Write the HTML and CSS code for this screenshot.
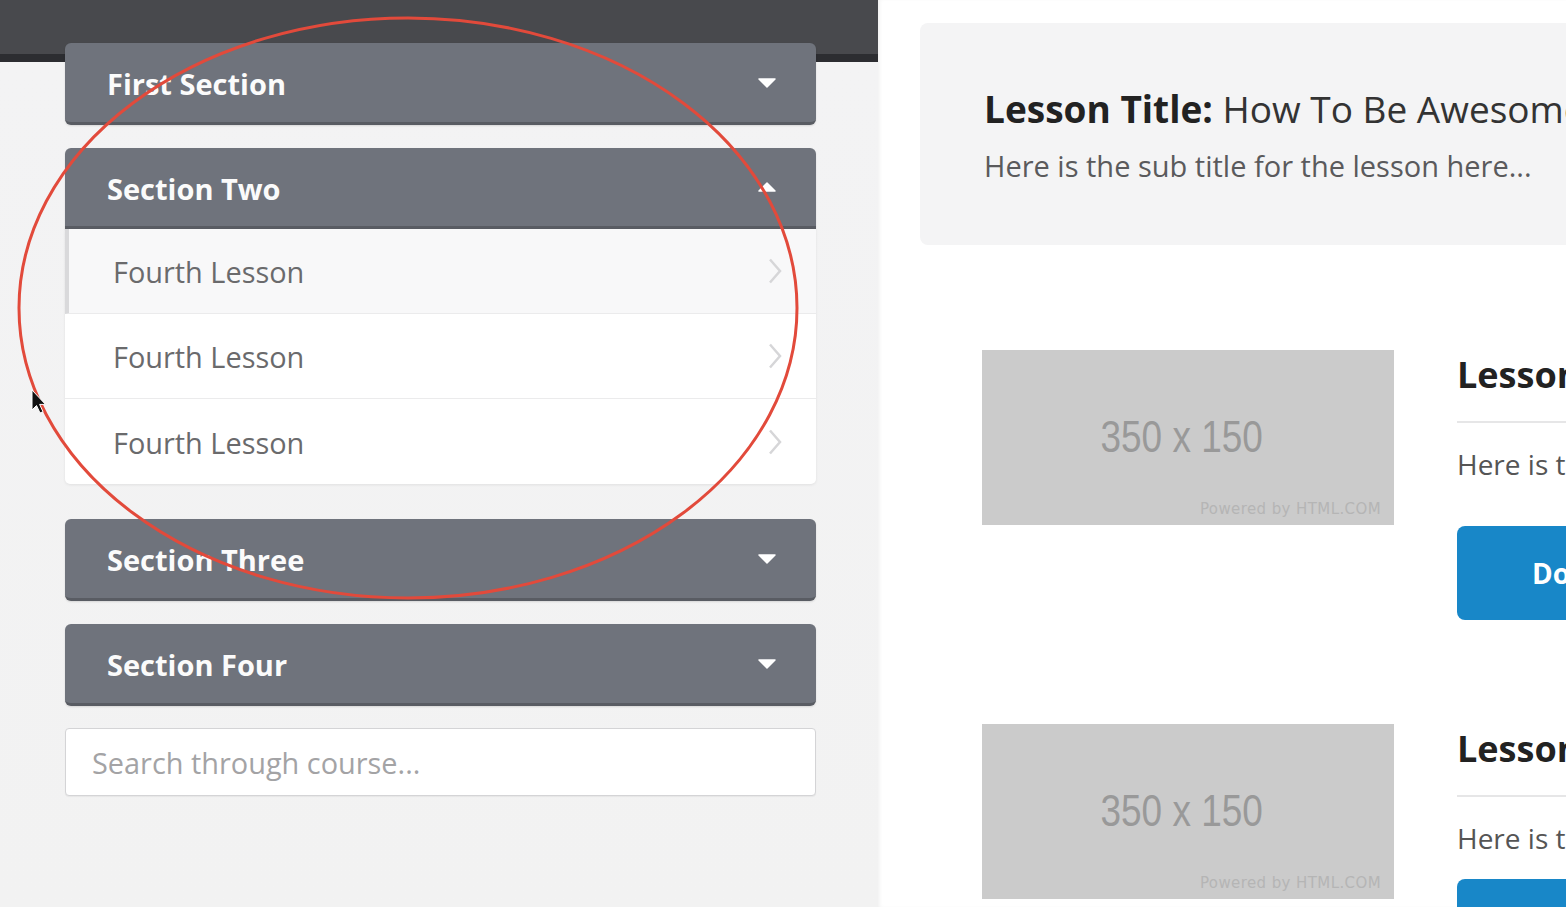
FILE: index.html
```html
<!DOCTYPE html>
<html lang="en">
<head>
<meta charset="utf-8">
<title>Course Lesson</title>
<link rel="stylesheet" href="styles.css">
</head>
<body>
<div class="page">
  <aside class="sidebar">
    <div class="accordion">
      <div class="section">
        <div class="section-head">
          <span>First Section</span>
          <svg class="caret" width="18" height="10" viewBox="0 0 18 10"><path d="M1 1 H17 L9 9 Z" fill="#fff" stroke="#fff" stroke-width="1.5" stroke-linejoin="round"/></svg>
        </div>
      </div>
      <div class="section open">
        <div class="section-head">
          <span>Section Two</span>
          <svg class="caret" width="18" height="10" viewBox="0 0 18 10"><path d="M1 9 H17 L9 1 Z" fill="#fff" stroke="#fff" stroke-width="1.5" stroke-linejoin="round"/></svg>
        </div>
        <ul class="lessons">
          <li class="lesson active"><span>Fourth Lesson</span><svg class="chev" width="14" height="26" viewBox="0 0 14 26"><path d="M2 1.5 L12 13 L2 24.5" fill="none" stroke="#d6d6d8" stroke-width="2.5"/></svg></li>
          <li class="lesson"><span>Fourth Lesson</span><svg class="chev" width="14" height="26" viewBox="0 0 14 26"><path d="M2 1.5 L12 13 L2 24.5" fill="none" stroke="#d6d6d8" stroke-width="2.5"/></svg></li>
          <li class="lesson"><span>Fourth Lesson</span><svg class="chev" width="14" height="26" viewBox="0 0 14 26"><path d="M2 1.5 L12 13 L2 24.5" fill="none" stroke="#d6d6d8" stroke-width="2.5"/></svg></li>
        </ul>
      </div>
      <div class="section">
        <div class="section-head">
          <span>Section Three</span>
          <svg class="caret" width="18" height="10" viewBox="0 0 18 10"><path d="M1 1 H17 L9 9 Z" fill="#fff" stroke="#fff" stroke-width="1.5" stroke-linejoin="round"/></svg>
        </div>
      </div>
      <div class="section">
        <div class="section-head">
          <span>Section Four</span>
          <svg class="caret" width="18" height="10" viewBox="0 0 18 10"><path d="M1 1 H17 L9 9 Z" fill="#fff" stroke="#fff" stroke-width="1.5" stroke-linejoin="round"/></svg>
        </div>
      </div>
      <input class="search" type="text" placeholder="Search through course...">
    </div>
  </aside>

  <main class="content">
    <div class="lesson-card">
      <h1 class="lesson-title"><strong>Lesson Title:</strong> How To Be Awesome</h1>
      <p class="lesson-sub">Here is the sub title for the lesson here...</p>
    </div>

    <div class="row">
      <div class="ph">
        <div class="ph-size"><span>350 x 150</span></div>
        <div class="ph-credit">Powered by HTML.COM</div>
      </div>
      <div class="row-text">
        <h2>Lesson One</h2>
        <hr>
        <p>Here is the lesson description</p>
        <a class="btn" href="#">Download</a>
      </div>
    </div>

    <div class="row">
      <div class="ph">
        <div class="ph-size"><span>350 x 150</span></div>
        <div class="ph-credit">Powered by HTML.COM</div>
      </div>
      <div class="row-text">
        <h2>Lesson Two</h2>
        <hr>
        <p>Here is the lesson description</p>
        <a class="btn btn-tight" href="#">Download</a>
      </div>
    </div>
  </main>

  <svg class="annotation" width="1566" height="907" viewBox="0 0 1566 907">
    <ellipse cx="408" cy="308" rx="389" ry="290" fill="none" stroke="#e24a3b" stroke-width="3"/>
  </svg>
  <svg class="cursor" width="16" height="26" viewBox="0 0 16 26">
    <path d="M1 1 L1 21 L5.5 16.5 L9 24 L12 22.7 L8.6 15.4 L14.5 15.4 Z" fill="#111" stroke="#fff" stroke-width="1"/>
  </svg>
</div>
</body>
</html>
```

FILE: styles.css
```css
* { box-sizing: border-box; }

html, body {
  margin: 0;
  padding: 0;
  width: 1566px;
  height: 907px;
  overflow: hidden;
  font-family: "Open Sans", "Noto Sans", sans-serif;
}

.page {
  position: relative;
  display: flex;
  width: 1566px;
  height: 907px;
  overflow: hidden;
}

/* ---------- Sidebar ---------- */
.sidebar {
  flex: 0 0 878px;
  height: 907px;
  background: linear-gradient(to bottom,
    #48494d 0, #48494d 54px,
    #2c2d31 54px, #2c2d31 62px,
    #f3f3f4 62px, #f2f2f2 100%);
  padding: 43px 0 0 65px;
}

.accordion {
  width: 751px;
  display: flex;
  flex-direction: column;
}

.section { margin-bottom: 23px; }
.section.open { margin-bottom: 35px; }

.section-head {
  height: 82px;
  background: #6f737c;
  border-bottom: 3px solid #595c63;
  border-radius: 6px;
  display: flex;
  align-items: center;
  justify-content: space-between;
  padding: 0 40px 0 42px;
  color: #fbfbfb;
  font-weight: 700;
  font-size: 29px;
  box-shadow: 0 1px 2px rgba(0,0,0,0.12);
}
.section-head span { padding-top: 2px; }

.section.open .section-head {
  border-radius: 6px 6px 0 0;
  height: 81px;
}

.lessons {
  list-style: none;
  margin: 0;
  padding: 0;
  background: #fff;
  border-radius: 0 0 5px 5px;
  box-shadow: 0 1px 3px rgba(0,0,0,0.08);
  overflow: hidden;
}

.lesson {
  height: 85px;
  display: flex;
  align-items: center;
  justify-content: space-between;
  padding: 0 34px 0 48px;
  border-bottom: 1px solid #ebebec;
  color: #6a6a6c;
  font-size: 28.9px;
}
.lesson span { padding-top: 1px; }
.lesson:last-child { border-bottom: none; }
.lesson.active {
  background: #f8f8f9;
  border-left: 4px solid #d9d9db;
  padding-left: 44px;
}

.search {
  margin-top: -1px;
  width: 751px;
  height: 68px;
  border: 1px solid #d4d4d6;
  border-radius: 4px;
  background: #fff;
  padding: 0 26px;
  font-family: "Open Sans", "Noto Sans", sans-serif;
  font-size: 28.9px;
  color: #555;
  outline: none;
  box-shadow: 0 1px 1px rgba(0,0,0,0.05);
}
.search::placeholder { color: #a3a3a5; }

/* ---------- Content ---------- */
.content {
  flex: 1 1 auto;
  min-width: 0;
  height: 907px;
  overflow: hidden;
  background: #fff;
  padding: 23px 0 0 42px;
  box-shadow: inset 3px 0 4px -2px rgba(0,0,0,0.07);
}

.lesson-card {
  width: 900px;
  background: #f4f4f5;
  border-radius: 8px;
  padding: 62px 64px 60px;
}

.lesson-title {
  margin: 0;
  font-size: 37px;
  line-height: 47px;
  font-weight: 400;
  color: #333;
  white-space: nowrap;
}
.lesson-title strong { font-weight: 700; color: #222; }

.lesson-sub {
  margin: 15px 0 0;
  font-size: 29px;
  line-height: 38px;
  color: #5a5a5c;
  white-space: nowrap;
}

.row {
  display: flex;
  gap: 63px;
  margin-top: 105px;
  padding-left: 62px;
  width: 1200px;
}
.row + .row { margin-top: 104px; }

.ph {
  flex: 0 0 412px;
  height: 175px;
  background: #cbcbcb;
  display: flex;
  flex-direction: column;
}
.ph-size {
  flex: 1;
  display: flex;
  align-items: center;
  justify-content: center;
  padding-top: 24px;
  padding-right: 12px;
}
.ph-size span {
  display: inline-block;
  font-family: "Liberation Sans", Arial, sans-serif;
  font-size: 44px;
  color: #999;
  transform: scaleX(0.84);
  white-space: nowrap;
}
.ph-credit {
  align-self: flex-end;
  padding: 0 13px 7px 0;
  font-family: "DejaVu Sans", sans-serif;
  font-size: 15px;
  letter-spacing: 0.4px;
  color: #b5b5b5;
}

.row-text {
  flex: 0 0 500px;
}
.row-text h2 {
  margin: 0;
  font-size: 36px;
  line-height: 49px;
  font-weight: 700;
  color: #222;
  white-space: nowrap;
}
.row-text hr {
  margin: 22px 0 0;
  border: none;
  height: 2px;
  background: #e6e6e7;
}
.row-text p {
  margin: 22px 0 0;
  font-size: 28px;
  line-height: 38px;
  color: #555;
  white-space: nowrap;
}
.btn {
  display: flex;
  align-items: center;
  margin-top: 43px;
  height: 94px;
  width: 360px;
  padding: 0 75px;
  background: #1887c8;
  border-radius: 8px;
  color: #fff;
  font-weight: 700;
  font-size: 28px;
  text-decoration: none;
}
.btn-tight { margin-top: 22px; }

/* ---------- Overlays ---------- */
.annotation {
  position: absolute;
  left: 0;
  top: 0;
  pointer-events: none;
}
.cursor {
  position: absolute;
  left: 31px;
  top: 389px;
  pointer-events: none;
}
```
